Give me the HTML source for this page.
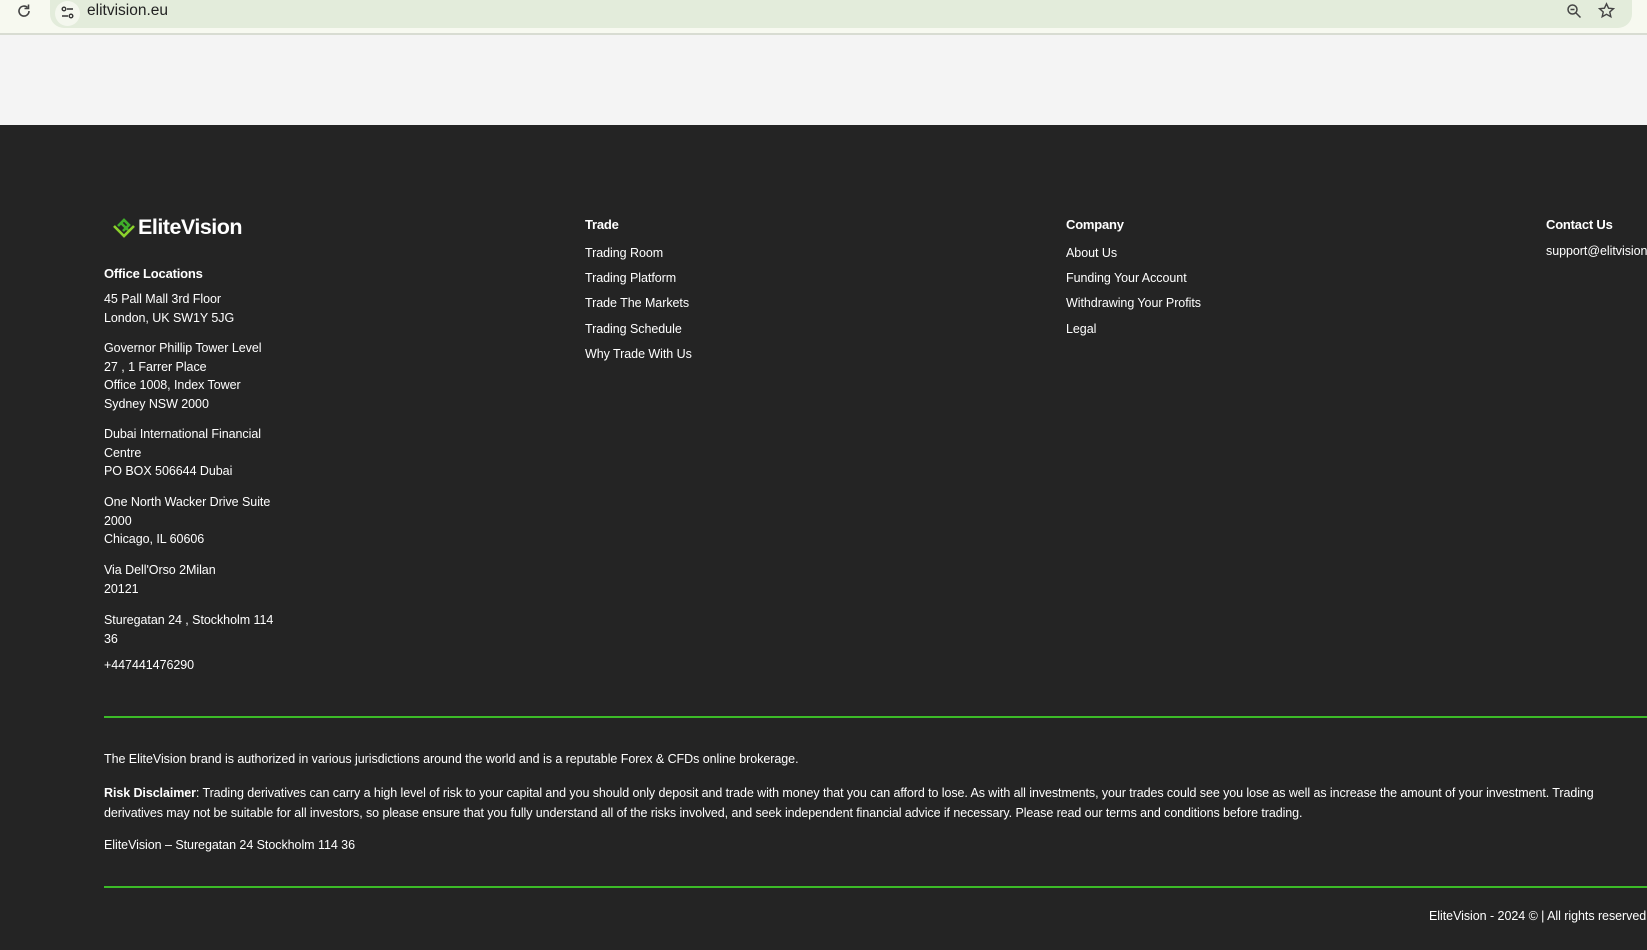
<!DOCTYPE html>
<html><head><meta charset="utf-8"><style>
*{margin:0;padding:0;box-sizing:border-box}
body{width:1647px;height:950px;overflow:hidden;background:#242424;font-family:"Liberation Sans",sans-serif;color:#fff;position:relative}
.bar{position:absolute;left:0;top:0;width:1647px;height:35px;background:#f7f9f0;border-bottom:2px solid #d8dcd2}
.pill{position:absolute;left:50px;top:0;width:1582px;height:28px;background:#e3ecdb;border-radius:0 0 14px 14px}
.light{position:absolute;left:0;top:35px;width:1647px;height:90px;background:#f4f4f4}
.t{position:absolute;font-size:12.5px;letter-spacing:-0.05px;white-space:nowrap;line-height:18.5px}
.h{font-weight:bold;font-size:13px;letter-spacing:-0.2px}
.hr{position:absolute;left:104px;width:1543px;height:1.5px;background:#3cbb28}
</style></head><body>
<div class="bar"><div class="pill"></div>
<svg style="position:absolute;left:16px;top:3px" width="16" height="16" viewBox="0 0 16 16"><path d="M13 8a5 5 0 1 1-1.5-3.5" fill="none" stroke="#444" stroke-width="1.6"/><path d="M12.5 1.5v4h-4" fill="none" stroke="#444" stroke-width="1.6"/></svg>
<div style="position:absolute;left:55px;top:1px;width:25px;height:25px;border-radius:50%;background:#f4f7ee"></div>
<svg style="position:absolute;left:60px;top:5px" width="16" height="16" viewBox="0 0 16 16" fill="none" stroke="#333" stroke-width="1.4"><circle cx="4" cy="4" r="1.8"/><path d="M7 4h6M2 11h6"/><circle cx="11" cy="11" r="1.8"/></svg>
<div style="position:absolute;left:87px;top:2px;font-size:15.5px;color:#222">elitvision.eu</div>
<svg style="position:absolute;left:1566px;top:3px" width="16" height="16" viewBox="0 0 16 16" fill="none" stroke="#444" stroke-width="1.5"><circle cx="6.5" cy="6.5" r="4.5"/><path d="M4.5 6.5h4M10 10l4.5 4.5"/></svg>
<svg style="position:absolute;left:1598px;top:2px" width="17" height="17" viewBox="0 0 24 24" fill="none" stroke="#444" stroke-width="2"><path d="M12 2.5l2.9 6.3 6.8.7-5.1 4.6 1.5 6.7L12 17.3l-6.1 3.5 1.5-6.7-5.1-4.6 6.8-.7z"/></svg>
</div>
<div class="light"></div>

<svg style="position:absolute;left:112px;top:214px" width="24" height="24" viewBox="0 0 24 24" fill="none" stroke-width="2.6"><path d="M2 12l10 10 10-10" stroke="#8bd12c"/><path d="M6 12l6-6 5 5-6 6" stroke="#3fae2a"/><path d="M9 9l7 7" stroke="#3fae2a"/></svg>
<div class="t" style="left:138px;top:213px;font-size:21.5px;font-weight:bold;letter-spacing:-0.5px;line-height:28px">EliteVision</div>

<div class="t h" style="left:104px;top:265px">Office Locations</div>
<div class="t" style="left:104px;top:290px">45 Pall Mall 3rd Floor<br>London, UK SW1Y 5JG</div>
<div class="t" style="left:104px;top:339px">Governor Phillip Tower Level<br>27 , 1 Farrer Place<br>Office 1008, Index Tower<br>Sydney NSW 2000</div>
<div class="t" style="left:104px;top:425px">Dubai International Financial<br>Centre<br>PO BOX 506644 Dubai</div>
<div class="t" style="left:104px;top:493px">One North Wacker Drive Suite<br>2000<br>Chicago, IL 60606</div>
<div class="t" style="left:104px;top:561px">Via Dell'Orso 2Milan<br>20121</div>
<div class="t" style="left:104px;top:611px">Sturegatan 24 , Stockholm 114<br>36</div>
<div class="t" style="left:104px;top:656px">+447441476290</div>

<div class="t h" style="left:585px;top:216px">Trade</div>
<div class="t" style="left:585px;top:244px">Trading Room</div>
<div class="t" style="left:585px;top:269px">Trading Platform</div>
<div class="t" style="left:585px;top:294px">Trade The Markets</div>
<div class="t" style="left:585px;top:320px">Trading Schedule</div>
<div class="t" style="left:585px;top:345px">Why Trade With Us</div>

<div class="t h" style="left:1066px;top:216px">Company</div>
<div class="t" style="left:1066px;top:244px">About Us</div>
<div class="t" style="left:1066px;top:269px">Funding Your Account</div>
<div class="t" style="left:1066px;top:294px">Withdrawing Your Profits</div>
<div class="t" style="left:1066px;top:320px">Legal</div>

<div class="t h" style="left:1546px;top:216px">Contact Us</div>
<div class="t" style="left:1546px;top:242px">support@elitvision.eu</div>

<div class="hr" style="top:716px"></div>
<div class="t" style="left:104px;top:750px">The EliteVision brand is authorized in various jurisdictions around the world and is a reputable Forex &amp; CFDs online brokerage.</div>
<div class="t" style="left:104px;top:784px;letter-spacing:-0.08px"><b>Risk Disclaimer</b>: Trading derivatives can carry a high level of risk to your capital and you should only deposit and trade with money that you can afford to lose. As with all investments, your trades could see you lose as well as increase the amount of your investment. Trading</div>
<div class="t" style="left:104px;top:804px;letter-spacing:-0.08px">derivatives may not be suitable for all investors, so please ensure that you fully understand all of the risks involved, and seek independent financial advice if necessary. Please read our terms and conditions before trading.</div>
<div class="t" style="left:104px;top:836px">EliteVision – Sturegatan 24 Stockholm 114 36</div>
<div class="hr" style="top:886px"></div>
<div class="t" style="left:1429px;top:907px">EliteVision - 2024 © | All rights reserved</div>
</body></html>
